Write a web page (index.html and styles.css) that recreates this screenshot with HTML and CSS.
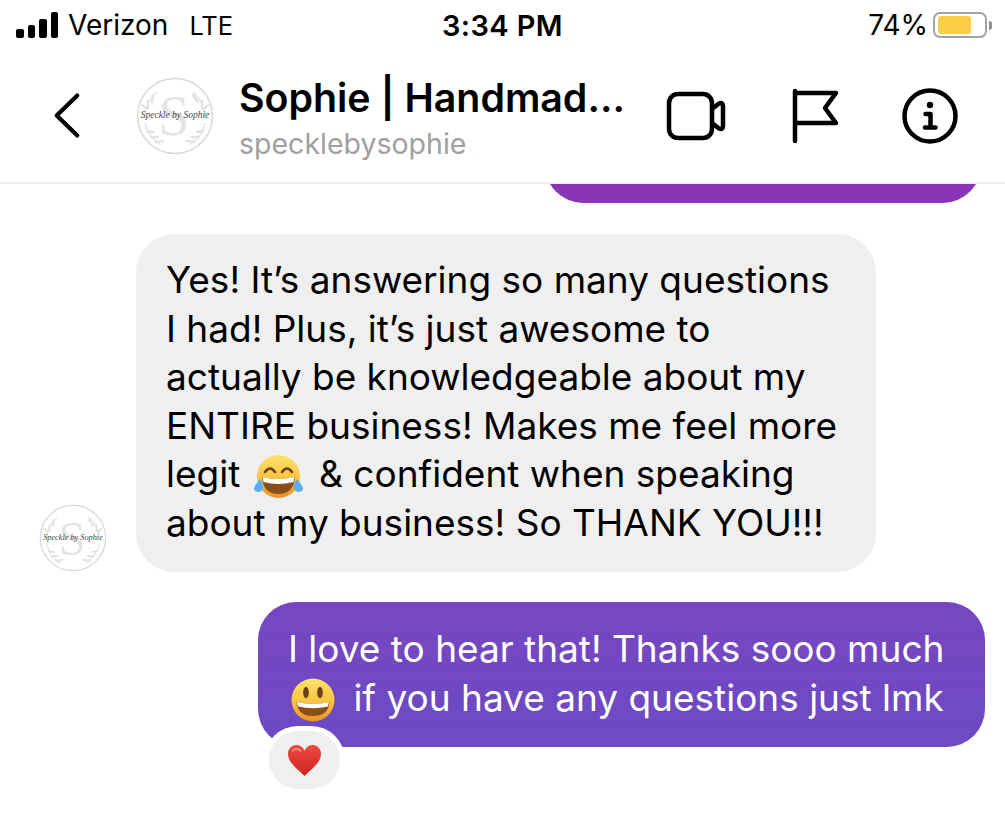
FILE: index.html
```html
<!DOCTYPE html>
<html lang="en">
<head>
  <meta charset="UTF-8" />
  <title>Sophie | Handmade - Chat</title>
  <link rel="stylesheet" href="styles.css">
</head>
<body>

<div class="phone">
  <div class="status-bar">
    <div class="status-left">
      <div class="signal">
        <span class="bar bar-1"></span>
        <span class="bar bar-2"></span>
        <span class="bar bar-3"></span>
        <span class="bar bar-4"></span>
      </div>
      <span class="carrier">Verizon</span>
      <span class="network">LTE</span>
    </div>
    <div class="status-time">3:34 PM</div>
    <div class="status-right">
      <span class="percent">74%</span>
      <div class="battery"><div class="battery-fill"></div></div>
      <div class="battery-cap"></div>
    </div>
  </div>

  <header class="chat-header">
    <svg class="back-icon" viewBox="0 0 30 52">
      <path d="M26 4L4 25.500L26 47" fill="none" stroke="#000" stroke-width="4.500" stroke-linecap="round" stroke-linejoin="round"/>
    </svg>
    <svg class="logo logo-header" viewBox="0 0 78 78">
      <use href="#logo-art"/>
    </svg>
    <div class="chat-title">
      <div class="chat-name">Sophie | Handmad...</div>
      <div class="chat-handle">specklebysophie</div>
    </div>
    <div class="header-icons">
      <svg class="video-icon" viewBox="0 0 60 50">
        <rect x="3" y="3" width="43" height="44" rx="9" fill="none" stroke="#000" stroke-width="4.500"/>
        <path d="M46 18L53 12.500Q57 11 57 15V35Q57 39 53 37.500L46 32" fill="none" stroke="#000" stroke-width="4.500" stroke-linejoin="round"/>
      </svg>
      <svg class="flag-icon" viewBox="0 0 48 56">
        <path d="M3 3V53M3 5H44L33 20L44 35H3" fill="none" stroke="#000" stroke-width="4.500" stroke-linecap="round" stroke-linejoin="round"/>
      </svg>
      <svg class="info-icon" viewBox="0 0 56 56">
        <circle cx="28" cy="28" r="25.500" fill="none" stroke="#000" stroke-width="4.500"/>
        <circle cx="28" cy="17" r="3.200" fill="#000"/>
        <path d="M23.500 26H28.500V39M23 39.500H33.500" fill="none" stroke="#000" stroke-width="4.500" stroke-linecap="round" stroke-linejoin="round"/>
      </svg>
    </div>
  </header>

  <main class="messages">
    <div class="prev-clip"><div class="prev-bubble"></div></div>

    <div class="row-in">
      <svg class="logo logo-avatar" viewBox="0 0 78 78">
        <use href="#logo-art"/>
      </svg>
      <div class="bubble bubble-in">
        Yes! It’s answering so many questions<br>
        I had! Plus, it’s just awesome to<br>
        actually be knowledgeable about my<br>
        ENTIRE business! Makes me feel more<br>
        legit
        <svg class="emoji emoji-laugh" viewBox="0 0 49 43">
          <circle cx="24.500" cy="21.500" r="21.500" fill="url(#face)"/>
          <path d="M11 17Q16 10 21 17M28 17Q33 10 38 17" fill="none" stroke="#6b4212" stroke-width="2.600" stroke-linecap="round"/>
          <path d="M8 22Q24.500 26 41 22Q40 39 24.500 39Q9 39 8 22Z" fill="#8a4e1c"/>
          <path d="M8.500 22Q24.500 26 40.500 22L39.500 27Q24.500 31 9.500 27Z" fill="#fff"/>
          <path d="M6 24C3 28 0 31 0 34C1 38 7 38 9 34C10 31 8 28 6 24Z" fill="#57aef0"/>
          <path d="M43 24C46 28 49 31 49 34C48 38 42 38 40 34C39 31 41 28 43 24Z" fill="#57aef0"/>
        </svg>
        &amp; confident when speaking<br>
        about my business! So THANK YOU!!!
      </div>
    </div>

    <div class="row-out">
      <div class="bubble bubble-out">
        I love to hear that! Thanks sooo much<br>
        <svg class="emoji emoji-smile" viewBox="0 0 44 44">
          <circle cx="22" cy="22" r="21.500" fill="url(#face)"/>
          <ellipse cx="15" cy="14.500" rx="2.800" ry="5.800" fill="#6b4212"/>
          <ellipse cx="29" cy="14.500" rx="2.800" ry="5.800" fill="#6b4212"/>
          <path d="M5.500 24Q22 28 38.500 24Q37.500 38 22 38Q6.500 38 5.500 24Z" fill="#8a4e1c"/>
          <path d="M6 24Q22 28 38 24L37 28.500Q22 32 7 28.500Z" fill="#fff"/>
        </svg>
        if you have any questions just lmk
        <div class="reaction">
          <svg class="heart" viewBox="0 0 36 34">
            <path d="M18 33C10 25 1 19 1 10C1 4 5.500 1 9.500 1C13 1 16.500 3 18 7C19.500 3 23 1 26.500 1C30.500 1 35 4 35 10C35 19 26 25 18 33Z" fill="url(#heart-fill)"/>
            <path d="M6 7C8 4.500 12 4.500 14 7" fill="none" stroke="#f58a80" stroke-width="2" stroke-linecap="round"/>
          </svg>
        </div>
      </div>
    </div>
  </main>
</div>

<svg class="logo-defs" width="0" height="0">
  <defs>
    <linearGradient id="face" x1="0" y1="0" x2="0" y2="1">
      <stop offset="0" stop-color="#fde36a"/>
      <stop offset="0.6" stop-color="#f9bf3c"/>
      <stop offset="1" stop-color="#e8902a"/>
    </linearGradient>
    <linearGradient id="heart-fill" x1="0" y1="0" x2="0" y2="1">
      <stop offset="0" stop-color="#ee4a40"/>
      <stop offset="1" stop-color="#cf2420"/>
    </linearGradient>
    <g id="logo-art">
      <circle cx="39" cy="39" r="37.500" fill="#fff" stroke="#d9d9d9" stroke-width="1.500"/>
      <text class="logo-s" x="38" y="58" text-anchor="middle">S</text>
      <path d="M21 15Q9 26 9 38M57 15Q69 26 69 38M9 46Q12 60 25 68M69 46Q66 60 53 68" fill="none" stroke="#e2e2e2" stroke-width="1.200"/>
      <path d="M17 18L16 25M12 24L12 31M10 32L6 28M57 18L62 25M66 24L66 31M68 32L72 28M11 54L17 55M15 60L22 60M20 65L27 64M67 54L61 55M63 60L56 60M58 65L51 64" fill="none" stroke="#e2e2e2" stroke-width="2.400" stroke-linecap="round"/>
      <text class="logo-script" x="39" y="41" text-anchor="middle">Speckle by Sophie</text>
    </g>
  </defs>
</svg>

</body>
</html>
```

FILE: styles.css
```css
body {
  margin: 0;
  padding: 0;
  background-color: #fff;
  color: #000;
  font-family: Inter, "Liberation Sans", sans-serif;
}

.phone {
  width: 1005px;
  height: 814px;
  overflow: hidden;
}

/* status bar */
.status-bar {
  height: 50px;
  display: grid;
  grid-template-columns: 1fr auto 1fr;
  align-items: center;
  font-size: 28px;
  padding: 0 13px 0 16px;
  box-sizing: border-box;
}

.status-left {
  display: flex;
  align-items: center;
}

.signal {
  display: flex;
  align-items: flex-end;
  gap: 4px;
  height: 26px;
  margin-right: 10px;
}

.bar {
  width: 7.500px;
  background-color: #000;
  border-radius: 2px;
}

.bar-1 { height: 9px; }
.bar-2 { height: 13px; }
.bar-3 { height: 19px; }
.bar-4 { height: 26px; }

.carrier {
  margin-right: 21px;
}

.network {
  font-size: 25.500px;
}

.status-time {
  font-size: 29px;
  font-weight: 600;
  letter-spacing: 0.4px;
  padding-right: 3px;
}

.status-right {
  display: flex;
  align-items: center;
  justify-content: flex-end;
}

.percent {
  margin-right: 5px;
}

.battery {
  width: 54px;
  height: 26px;
  border: 2px solid #a3a3a3;
  border-radius: 7px;
  box-sizing: border-box;
  padding: 2px 3px;
}

.battery-fill {
  width: 33px;
  height: 100%;
  background-color: #f9ce46;
  border-radius: 3px;
}

.battery-cap {
  width: 3px;
  height: 9px;
  margin-left: 2px;
  background-color: #8e8e8e;
  border-radius: 0 3px 3px 0;
}

/* header */
.chat-header {
  height: 134px;
  box-sizing: border-box;
  border-bottom: 2px solid #ececec;
  display: flex;
  align-items: center;
  padding: 0 47px 0 53px;
}

.back-icon {
  width: 28px;
  height: 50px;
  margin-right: 55px;
}

.logo {
  display: block;
  flex-shrink: 0;
}

.logo-header {
  width: 78px;
  height: 78px;
  margin-right: 25px;
}

.logo-s {
  font-family: "Liberation Serif", serif;
  font-size: 56px;
  fill: #e4e4e4;
}

.logo-script {
  font-family: "Liberation Serif", serif;
  font-style: italic;
  font-size: 9.500px;
  fill: #444;
}

.logo-defs {
  position: absolute;
}

.chat-title {
  width: 426px;
  flex-shrink: 0;
  padding-top: 5px;
}

.chat-name {
  font-size: 39.300px;
  font-weight: 600;
  line-height: 46px;
  white-space: nowrap;
}

.chat-handle {
  font-size: 28.500px;
  color: #a0a0a0;
  line-height: 36px;
  margin-top: 5px;
}

.header-icons {
  display: flex;
  align-items: center;
  margin-left: auto;
}

.video-icon {
  width: 60px;
  height: 50px;
  margin-right: 66px;
}

.flag-icon {
  width: 48px;
  height: 56px;
  margin-right: 62px;
}

.info-icon {
  width: 56px;
  height: 56px;
}

/* messages */
.prev-clip {
  height: 19px;
  margin: 0 24px 31px 545px;
  overflow: hidden;
}

.prev-bubble {
  height: 80px;
  margin-top: -61px;
  border-radius: 38px;
  background-color: #8a35b5;
}

.row-in {
  display: flex;
  align-items: flex-end;
  padding-left: 39px;
  margin-bottom: 30px;
}

.logo-avatar {
  width: 68px;
  height: 68px;
  margin-right: 29px;
}

.bubble {
  box-sizing: border-box;
  font-size: 37px;
  line-height: 48.500px;
  white-space: nowrap;
  border-radius: 38px;
}

.bubble-in {
  width: 740px;
  height: 338px;
  padding: 22px 30px;
  background-color: #efefef;
}

.row-out {
  display: flex;
  justify-content: flex-end;
  padding-right: 20px;
}

.bubble-out {
  position: relative;
  width: 727px;
  height: 145px;
  padding: 23px 30px;
  color: #fff;
  background: linear-gradient(180deg, #7746c0, #6b4bc4);
}

.emoji {
  vertical-align: middle;
}

.emoji-laugh {
  width: 49px;
  height: 43px;
  margin: -10px 6px -10px 3px;
}

.emoji-smile {
  width: 44px;
  height: 44px;
  margin: -10px 8px -10px 3px;
}

.reaction {
  position: absolute;
  left: 11px;
  top: 129px;
  width: 71px;
  height: 58px;
  display: flex;
  align-items: center;
  justify-content: center;
  background-color: #efefef;
  border-radius: 29px;
  box-shadow: 0 0 0 5px #fff;
}

.heart {
  width: 35px;
  height: 33px;
}
```
